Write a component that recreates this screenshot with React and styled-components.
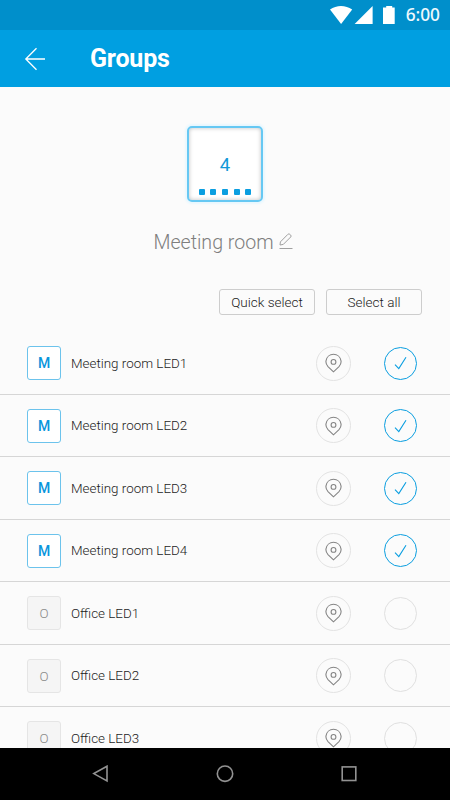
import React, { useState } from 'react';
import styled, { createGlobalStyle } from 'styled-components';

const colors = {
    primary: '#009fe1',
    primaryDark: '#008fcb',
    background: '#fbfbfb',
    line: '#d6d6d6',
    text: '#1c1c1c',
};

const initialDevices = [
    { name: 'Meeting room LED1', selected: true },
    { name: 'Meeting room LED2', selected: true },
    { name: 'Meeting room LED3', selected: true },
    { name: 'Meeting room LED4', selected: true },
    { name: 'Office LED1', selected: false },
    { name: 'Office LED2', selected: false },
    { name: 'Office LED3', selected: false },
];

const GlobalStyle = createGlobalStyle`
    * {
        box-sizing: border-box;
    }

    body {
        margin: 0;
        font-family: Roboto, "Liberation Sans", sans-serif;
        background-color: ${colors.background};
    }

    button {
        font-family: inherit;
        padding: 0;
        margin: 0;
        cursor: pointer;
    }

    svg {
        display: block;
        flex: none;
    }
`;

const Screen = styled.div`
    display: flex;
    flex-direction: column;
    width: 450px;
    height: 800px;
    overflow: hidden;
    background-color: ${colors.background};
`;

const StatusBar = styled.div`
    display: flex;
    flex: none;
    align-items: center;
    justify-content: flex-end;
    height: 30px;
    padding-right: 10px;
    background-color: ${colors.primaryDark};
`;

const StatusIconGroup = styled.div`
    margin-right: 9px;
`;

const Clock = styled.span`
    color: #eef8fd;
    font-family: "Noto Sans", sans-serif;
    font-size: 17.3px;
    line-height: 30px;
    font-weight: 500;
`;

const Header = styled.header`
    display: flex;
    flex: none;
    align-items: center;
    height: 57px;
    padding-left: 24px;
    background-color: ${colors.primary};

    h1 {
        margin: 0 0 0 44px;
        color: #fff;
        font-size: 25px;
        line-height: 57px;
        font-weight: 700;
        letter-spacing: -0.2px;
    }
`;

const BackButton = styled.button`
    border: none;
    background: none;
`;

const Content = styled.main`
    display: flex;
    flex: 1;
    flex-direction: column;
    min-height: 0;
    overflow: hidden;
`;

const GroupInfo = styled.section`
    display: flex;
    flex: none;
    flex-direction: column;
    align-items: center;
    height: 202px;
    padding-top: 39px;
`;

const GroupCard = styled.div`
    display: flex;
    flex-direction: column;
    align-items: center;
    width: 76px;
    height: 76px;
    padding-top: 26px;
    border: 2px solid #66c8f3;
    border-radius: 5px;
    background-color: #fff;
    box-shadow: 0 0 2px 2px #e8f7fe, inset 0 0 4px rgba(0, 0, 0, 0.25);
`;

const GroupCount = styled.span`
    color: #1298d8;
    font-size: 18.5px;
    line-height: 22px;
`;

const Dots = styled.div`
    display: flex;
    gap: 5.6px;
    margin-top: 13px;
`;

const Dot = styled.span`
    width: 6px;
    height: 6px;
    border-radius: 1px;
    background-color: #0a9ee0;
`;

const GroupName = styled.div`
    display: flex;
    align-items: flex-start;
    gap: 5px;
    height: 28px;
    margin-top: 26px;
    margin-left: -4px;

    h2 {
        margin: 0;
        padding-top: 1px;
        color: #7e7e7e;
        font-size: 19.6px;
        line-height: 28px;
        font-weight: 300;
    }

    svg {
        margin-top: 5px;
    }
`;

const Actions = styled.div`
    display: flex;
    flex: none;
    justify-content: flex-end;
    gap: 11px;
    height: 43px;
    padding-right: 28px;
`;

const ActionButton = styled.button`
    width: 96px;
    height: 26px;
    border: 1px solid #cdcdcd;
    border-radius: 3px;
    background-color: transparent;
    color: ${colors.text};
    font-size: 13.5px;
    line-height: 25px;
    font-weight: 300;
`;

const DeviceList = styled.div`
    flex: none;
`;

const DeviceRow = styled.div`
    display: flex;
    align-items: center;
    height: 62.5px;
    padding: 1px 33px 0 27px;
    border-bottom: 1px solid ${colors.line};
`;

const Badge = styled.div`
    width: 34px;
    height: 34px;
    border: 1px solid ${(props) => (props.$selected ? '#6cc3ec' : '#e5e5e5')};
    border-radius: 3px;
    background-color: ${(props) => (props.$selected ? '#fff' : '#f5f5f5')};
    color: ${(props) => (props.$selected ? '#0a96dc' : '#8a8a8a')};
    font-size: ${(props) => (props.$selected ? '14px' : '13.4px')};
    line-height: 33px;
    font-weight: ${(props) => (props.$selected ? 500 : 300)};
    text-align: center;
`;

const DeviceName = styled.span`
    flex: 1;
    margin-left: 10px;
    color: ${colors.text};
    font-size: 13.4px;
    font-weight: 300;
`;

const LocateButton = styled.button`
    display: flex;
    align-items: center;
    justify-content: center;
    width: 35px;
    height: 35px;
    margin-right: 33px;
    border: 1px solid #e3e3e3;
    border-radius: 50%;
    background: none;
`;

const CheckButton = styled.button`
    display: flex;
    align-items: center;
    justify-content: center;
    width: 33px;
    height: 33px;
    border: 1px solid ${(props) => (props.$selected ? '#0a9ee0' : '#e0e0e0')};
    border-radius: 50%;
    background: none;
`;

const NavBar = styled.nav`
    display: flex;
    flex: none;
    align-items: center;
    justify-content: space-between;
    height: 52px;
    padding: 0 92px;
    background-color: #000;
`;

const BackArrow = () => (
    <svg width="22" height="24" viewBox="0 0 22 24" fill="none" stroke="#fff" strokeWidth="1.3">
        <path d="M12.5 1.2L1.8 12l10.7 10.8M1.8 12H21" />
    </svg>
);

const StatusIcons = () => (
    <svg width="67" height="20" viewBox="0 0 67 20" fill="#fff">
        <path d="M0 4.6C6.5-.1 15.5-.1 22.2 4.6L11.1 19z" />
        <path d="M42.6 1v18H24.6z" />
        <path d="M56.2 1h6v1.5h2.5V19H53V2.5h3.2z" />
    </svg>
);

const PencilIcon = () => (
    <svg width="14" height="16" viewBox="0 0 14 16" fill="none" stroke="#a0a0a0" strokeWidth="1">
        <path d="M1.4 8.9L8.8 1.4q1-1 2-.1l.9.8q.9.9 0 1.9L4.3 11.4l-3.3.6zM0.5 15.5h13" />
    </svg>
);

const PinIcon = () => (
    <svg width="17" height="20" viewBox="0 0 17 20" fill="none" stroke="#858585" strokeWidth="1.1">
        <path d="M8.5 18.8L3 13.6C.8 11.2.7 9.6 1 7.8 1.6 3.8 4.8 1.3 8.5 1.3s6.9 2.5 7.5 6.5c.3 1.8.2 3.4-2 5.8z" />
        <circle cx="8.5" cy="8.9" r="2.4" />
    </svg>
);

const CheckIcon = () => (
    <svg width="13" height="14" viewBox="0 0 13 14" fill="none" stroke="#0a9ee0" strokeWidth="1.1">
        <path d="M1 8.6l3.8 4L12 1.2" />
    </svg>
);

const App = () => {
    const [devices, setDevices] = useState(initialDevices);
    const selectedCount = devices.filter((device) => device.selected).length;

    const toggleDevice = (index) => {
        setDevices(devices.map((device, i) => (i === index ? { ...device, selected: !device.selected } : device)));
    };

    const selectAll = () => {
        setDevices(devices.map((device) => ({ ...device, selected: true })));
    };

    return (
        <>
            <GlobalStyle />
            <Screen>
                <StatusBar>
                    <StatusIconGroup>
                        <StatusIcons />
                    </StatusIconGroup>
                    <Clock>6:00</Clock>
                </StatusBar>
                <Header>
                    <BackButton>
                        <BackArrow />
                    </BackButton>
                    <h1>Groups</h1>
                </Header>
                <Content>
                    <GroupInfo>
                        <GroupCard>
                            <GroupCount>{selectedCount}</GroupCount>
                            <Dots>
                                {[0, 1, 2, 3, 4].map((dot) => (
                                    <Dot key={dot} />
                                ))}
                            </Dots>
                        </GroupCard>
                        <GroupName>
                            <h2>Meeting room</h2>
                            <PencilIcon />
                        </GroupName>
                    </GroupInfo>
                    <Actions>
                        <ActionButton>Quick select</ActionButton>
                        <ActionButton onClick={selectAll}>Select all</ActionButton>
                    </Actions>
                    <DeviceList>
                        {devices.map((device, index) => (
                            <DeviceRow key={device.name}>
                                <Badge $selected={device.selected}>{device.name[0]}</Badge>
                                <DeviceName>{device.name}</DeviceName>
                                <LocateButton>
                                    <PinIcon />
                                </LocateButton>
                                <CheckButton $selected={device.selected} onClick={() => toggleDevice(index)}>
                                    {device.selected && <CheckIcon />}
                                </CheckButton>
                            </DeviceRow>
                        ))}
                    </DeviceList>
                </Content>
                <NavBar>
                    <svg width="17" height="18" viewBox="0 0 17 18" fill="none" stroke="#929292" strokeWidth="1.6">
                        <path d="M15 1.2v14.8L1.8 8.6z" />
                    </svg>
                    <svg width="18" height="18" viewBox="0 0 18 18" fill="none" stroke="#929292" strokeWidth="1.6">
                        <circle cx="9" cy="8.7" r="7.7" />
                    </svg>
                    <svg width="17" height="18" viewBox="0 0 17 18" fill="none" stroke="#929292" strokeWidth="1.6">
                        <rect x="1.2" y="1.9" width="13.6" height="13.6" />
                    </svg>
                </NavBar>
            </Screen>
        </>
    );
};

export default App;
